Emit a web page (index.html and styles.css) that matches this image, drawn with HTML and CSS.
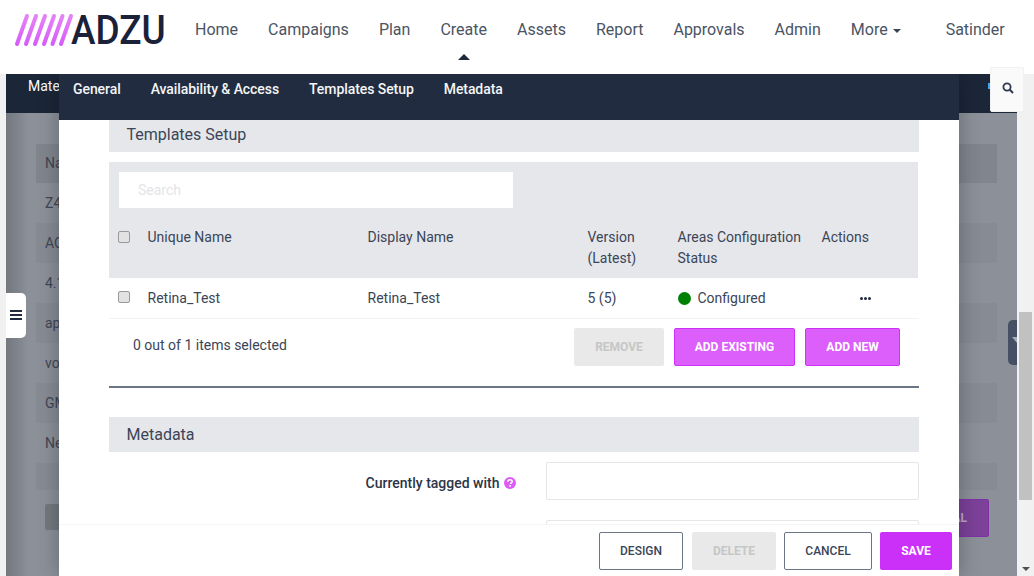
FILE: index.html
```html
<!DOCTYPE html>
<html lang="en">
<head>
    <meta charset="UTF-8">
    <meta name="viewport" content="width=device-width, initial-scale=1.0">
    <title>Templates Setup</title>
    <link rel="stylesheet" href="styles.css">
</head>
<body>
    <header class="topbar">
        <a class="logo" href="#">
            <svg class="logo-stripes" width="60" height="34" viewBox="0 0 60 34">
                <defs>
                    <linearGradient id="stripe" x1="0" y1="1" x2="0" y2="0">
                        <stop offset="0" stop-color="#d85cf8"/>
                        <stop offset="1" stop-color="#e484f5"/>
                    </linearGradient>
                </defs>
                <g stroke="url(#stripe)" stroke-width="4" stroke-linecap="round" fill="none">
                    <path d="M3 31L13 3"/>
                    <path d="M12 31L22 3"/>
                    <path d="M21 31L31 3"/>
                    <path d="M30 31L40 3"/>
                    <path d="M38.500 31L48.500 3"/>
                    <path d="M47 31L57 3"/>
                </g>
            </svg>
            <span class="logo-text">ADZU</span>
        </a>
        <nav class="mainnav">
            <a href="#">Home</a>
            <a href="#">Campaigns</a>
            <a href="#">Plan</a>
            <a href="#" class="active">Create</a>
            <a href="#">Assets</a>
            <a href="#">Report</a>
            <a href="#">Approvals</a>
            <a href="#">Admin</a>
            <a href="#">More <span class="caret"></span></a>
        </nav>
        <a class="user" href="#">Satinder</a>
    </header>

    <div class="stage">
        <div class="page">
            <div class="page-bar">Mate</div>
            <div class="page-list">
                <div class="page-row head">Name</div>
                <div class="page-row">Z4</div>
                <div class="page-row alt">AC</div>
                <div class="page-row">4.1</div>
                <div class="page-row alt">ap</div>
                <div class="page-row">vo</div>
                <div class="page-row alt">GM</div>
                <div class="page-row">Ne</div>
                <div class="page-row alt short"></div>
            </div>
            <div class="page-btns">
                <span class="page-btn"></span>
                <span class="page-btn purple">FINAL</span>
            </div>
        </div>

        <button class="side-toggle" type="button">
            <svg width="12" height="10" viewBox="0 0 12 10"><path d="M0 0h12v2H0zM0 4h12v2H0zM0 8h12v2H0z" fill="#1f2a3d"/></svg>
        </button>
        <span class="filter-tab"></span>
        <span class="blue-dot"></span>

        <section class="modal">
            <nav class="modal-tabs">
                <a href="#">General</a>
                <a href="#">Availability &amp; Access</a>
                <a href="#">Templates Setup</a>
                <a href="#">Metadata</a>
            </nav>

            <div class="modal-body">
                <h3 class="section-title first">Templates Setup</h3>

                <div class="table-head">
                    <input class="search" type="text" placeholder="Search">
                    <div class="grid-row">
                        <span class="cell-check"><span class="check"></span></span>
                        <span>Unique Name</span>
                        <span>Display Name</span>
                        <span>Version<br>(Latest)</span>
                        <span>Areas Configuration Status</span>
                        <span>Actions</span>
                    </div>
                </div>
                <div class="grid-row body-row">
                    <span class="cell-check"><span class="check"></span></span>
                    <span>Retina_Test</span>
                    <span>Retina_Test</span>
                    <span>5 (5)</span>
                    <span class="status"><span class="dot"></span>Configured</span>
                    <span class="dots"><i></i><i></i><i></i></span>
                </div>

                <div class="table-foot">
                    <span class="selected">0 out of 1 items selected</span>
                    <span class="btn disabled remove">REMOVE</span>
                    <span class="btn pink existing">ADD EXISTING</span>
                    <span class="btn pink addnew">ADD NEW</span>
                </div>

                <hr class="rule">

                <h3 class="section-title">Metadata</h3>

                <div class="form-row">
                    <label>Currently tagged with
                        <svg class="help" width="12" height="12" viewBox="0 0 12 12">
                            <circle cx="6" cy="6" r="6" fill="#dd5cf8"/>
                            <path d="M3.800 4.700C3.900 3.300 4.900 2.700 6 2.700c1.300 0 2.200.7 2.200 1.800 0 1.500-1.600 1.400-1.600 2.500" fill="none" stroke="#fff" stroke-width="1.500"/>
                            <rect x="5.300" y="8" width="1.700" height="1.600" fill="#fff"/>
                        </svg>
                    </label>
                    <span class="field"></span>
                </div>
                <div class="form-row">
                    <label></label>
                    <span class="field"></span>
                </div>
            </div>

            <footer class="modal-foot">
                <span class="btn outline design">DESIGN</span>
                <span class="btn disabled delete">DELETE</span>
                <span class="btn outline cancel">CANCEL</span>
                <span class="btn save">SAVE</span>
            </footer>
        </section>

        <button class="search-tab" type="button">
            <svg width="12" height="12" viewBox="0 0 12 12"><circle cx="5" cy="5" r="3.600" fill="none" stroke="#2f3a4f" stroke-width="1.800"/><path d="M7.800 7.800L11 11" stroke="#2f3a4f" stroke-width="2"/></svg>
        </button>

        <div class="scrollbar">
            <span class="thumb"></span>
            <span class="arrow-down"></span>
        </div>
    </div>
</body>
</html>
```

FILE: styles.css
```css
* {
    box-sizing: border-box;
}

html, body {
    margin: 0;
    height: 100%;
    overflow: hidden;
}

body {
    font-family: Roboto, Arial, sans-serif;
    font-size: 14px;
    color: #3b4557;
    background: #fff;
    display: flex;
    flex-direction: column;
}

a {
    color: inherit;
    text-decoration: none;
}

/* top bar */
.topbar {
    position: relative;
    z-index: 1;
    height: 74px;
    flex: none;
    display: flex;
    align-items: flex-start;
    background: #fff;
}

.logo {
    display: flex;
    align-items: center;
    height: 44px;
    margin: 8px 0 0 14px;
    width: 181px;
}

.logo-stripes {
    flex: none;
}

.logo-text {
    font-family: Roboto, sans-serif;
    font-weight: 500;
    font-size: 41px;
    line-height: 44px;
    color: #1a2138;
    margin-left: -3px;
    transform: scaleX(0.9);
    transform-origin: left center;
}

.mainnav {
    display: flex;
    gap: 30px;
    font-size: 16px;
    line-height: 19px;
    padding-top: 20px;
    color: #4a5464;
}

.mainnav a {
    position: relative;
}

.mainnav a.active::after {
    content: "";
    position: absolute;
    left: 50%;
    top: 34px;
    margin-left: -6px;
    border-left: 6px solid transparent;
    border-right: 6px solid transparent;
    border-bottom: 6px solid #1f2a3d;
}

.caret {
    display: inline-block;
    vertical-align: middle;
    margin-left: 1px;
    border-left: 4px solid transparent;
    border-right: 4px solid transparent;
    border-top: 4px solid #3b4557;
}

.user {
    font-size: 16px;
    line-height: 19px;
    margin-left: 45px;
    padding-top: 20px;
    color: #4a5464;
}

/* page behind the dialog */
.stage {
    position: relative;
    flex: 1;
    min-height: 0;
    background: #f1f1f1;
}

.page {
    height: 100%;
    width: 1011px;
    margin-left: 6px;
    background: linear-gradient(to right, #73777e 0, #8b9099 22px);
    color: #3f4654;
}

.page-bar {
    height: 39px;
    background: #1b2638;
    color: #fff;
    padding: 4px 0 0 22px;
    line-height: 17px;
}

.page-list {
    padding: 31px 20px 0 30px;
}

.page-row {
    height: 40px;
    line-height: 40px;
    padding-left: 9px;
}

.page-row.head {
    height: 39px;
    background: #80858e;
    line-height: 39px;
}

.page-row.alt {
    background: #868b94;
}

.page-row.short {
    height: 27px;
}

.page-btns {
    display: flex;
    justify-content: space-between;
    padding: 14px 28px 0 39px;
}

.page-btn {
    width: 120px;
    height: 26px;
    background: #73787f;
    border-radius: 2px;
}

.page-btn.purple {
    height: 38px;
    margin-top: -5px;
    background: #7c4199;
    border: 1px solid #7f31a8;
    color: #b9a8c4;
    font-size: 12px;
    font-weight: 700;
    line-height: 36px;
    text-align: right;
    padding-right: 21px;
}

.side-toggle {
    position: absolute;
    left: 6px;
    top: 219px;
    width: 20px;
    height: 45px;
    padding: 0;
    border: none;
    border-radius: 0 5px 5px 0;
    background: #fff;
}

.filter-tab {
    position: absolute;
    left: 1008px;
    top: 246px;
    width: 9px;
    height: 45px;
    background: #455064;
    border-radius: 5px 0 0 5px;
}

.filter-tab::after {
    content: "";
    position: absolute;
    left: 4px;
    top: 17px;
    border-left: 5px solid transparent;
    border-top: 6px solid #a8aeb8;
}

.blue-dot {
    position: absolute;
    left: 988px;
    top: 9px;
    width: 4px;
    height: 6px;
    background: #3fa9f5;
}

.search-tab {
    position: absolute;
    z-index: 2;
    left: 990px;
    top: -7px;
    width: 34px;
    height: 45px;
    padding: 0 0 0 2px;
    border: 1px solid #f1f1f1;
    border-radius: 2px;
    background: #fafafa;
}

.scrollbar {
    position: absolute;
    right: 0;
    top: 0;
    bottom: 0;
    width: 17px;
    background: #f1f1f1;
}

.thumb {
    position: absolute;
    left: 2px;
    top: 238px;
    width: 13px;
    height: 188px;
    background: #c1c1c1;
}

.arrow-down {
    position: absolute;
    left: 5px;
    bottom: 5px;
    border-left: 4px solid transparent;
    border-right: 4px solid transparent;
    border-top: 4px solid #505050;
}

/* dialog */
.modal {
    position: absolute;
    left: 59px;
    top: 0;
    bottom: 0;
    width: 900px;
    display: flex;
    flex-direction: column;
    background: #fff;
    box-shadow: 0 0 20px rgba(0, 0, 0, 0.28);
}

.modal-tabs {
    height: 46px;
    flex: none;
    display: flex;
    gap: 30px;
    padding: 7px 0 0 14px;
    background: #212c40;
    color: #f4f5f6;
    font-weight: 500;
    line-height: 17px;
    letter-spacing: -0.07px;
}

.modal-body {
    flex: 1;
    min-height: 0;
    overflow: hidden;
    padding: 0 40px 0 50px;
}

.section-title {
    margin: 0;
    height: 35px;
    padding-left: 17.5px;
    background: #e6e7eb;
    font-size: 16px;
    font-weight: 400;
    line-height: 35px;
    color: #3b4557;
}

.section-title.first {
    height: 32px;
    line-height: 29px;
}

.table-head {
    margin: 10px 1px 0 0;
    height: 116px;
    padding-top: 10px;
    background: #e6e7eb;
}

.search {
    display: block;
    width: 394px;
    height: 36px;
    margin-left: 10px;
    padding: 0 19px;
    border: none;
    outline: none;
    background: #fff;
    font: 14px Roboto, sans-serif;
}

.search::placeholder {
    color: #e3e4e8;
}

.grid-row {
    display: grid;
    grid-template-columns: 38.500px 220px 220px 90px 144px 1fr;
    padding-top: 19px;
    line-height: 21px;
}

.cell-check {
    padding-left: 9px;
}

.check {
    display: block;
    width: 12px;
    height: 12px;
    margin-top: 4px;
    border: 1px solid #999;
    border-radius: 2px;
    background: #e2e2e2;
}

.body-row {
    height: 41px;
    padding-top: 10px;
    border-bottom: 1px solid #f3f3f3;
}

.body-row .check {
    margin-top: 3px;
}

.status {
    display: flex;
    align-items: center;
    height: 21px;
}

.dot {
    width: 13px;
    height: 13px;
    margin-right: 7px;
    border-radius: 50%;
    background: #008000;
}

.dots {
    display: flex;
    gap: 1px;
    align-items: center;
    height: 21px;
    padding-left: 38px;
}

.dots i {
    width: 3px;
    height: 3px;
    background: #1f2a3d;
    border-radius: 50%;
}

.table-foot {
    display: flex;
    align-items: flex-start;
    padding-top: 9px;
    height: 67px;
}

.selected {
    margin: 0 auto 0 24px;
    padding-top: 7px;
    line-height: 21px;
}

.btn {
    display: block;
    height: 38px;
    border-radius: 2px;
    font-size: 12px;
    font-weight: 700;
    line-height: 36px;
    text-align: center;
    border: 1px solid transparent;
}

.btn.disabled {
    background: #e9e9e9;
    color: #c6c6c6;
}

.btn.pink {
    background: #dc5ffb;
    border-color: #cd30fa;
    color: #fff;
}

.remove {
    width: 90px;
    margin-right: 10px;
}

.existing {
    width: 121px;
    margin-right: 10px;
}

.addnew {
    width: 95px;
    margin-right: 19px;
}

.rule {
    height: 2px;
    margin: 0 0 29px;
    border: none;
    background: #6b7684;
}

.form-row {
    display: flex;
    height: 58px;
    padding-top: 10px;
}

.form-row label {
    width: 437px;
    padding: 11px 30px 0 0;
    text-align: right;
    font-weight: 500;
    color: #2b3446;
    line-height: 21px;
}

.help {
    vertical-align: -1px;
    margin-left: 1px;
}

.field {
    flex: 1;
    height: 38px;
    border: 1px solid #e6e6e6;
    border-radius: 2px;
}

.modal-foot {
    flex: none;
    height: 52px;
    display: flex;
    justify-content: flex-end;
    gap: 8px;
    padding: 7px 7px 0 0;
    background: #fff;
    border-top: 1px solid #f5f5f5;
}

.btn.outline {
    background: #fff;
    border-color: #6b7684;
    color: #3b4557;
    font-weight: 500;
}

.design {
    width: 84px;
}

.delete {
    width: 84px;
    margin-left: 1px;
}

.cancel {
    width: 88px;
}

.save {
    width: 72px;
    background: #cb30f9;
    color: #fff;
}
```
